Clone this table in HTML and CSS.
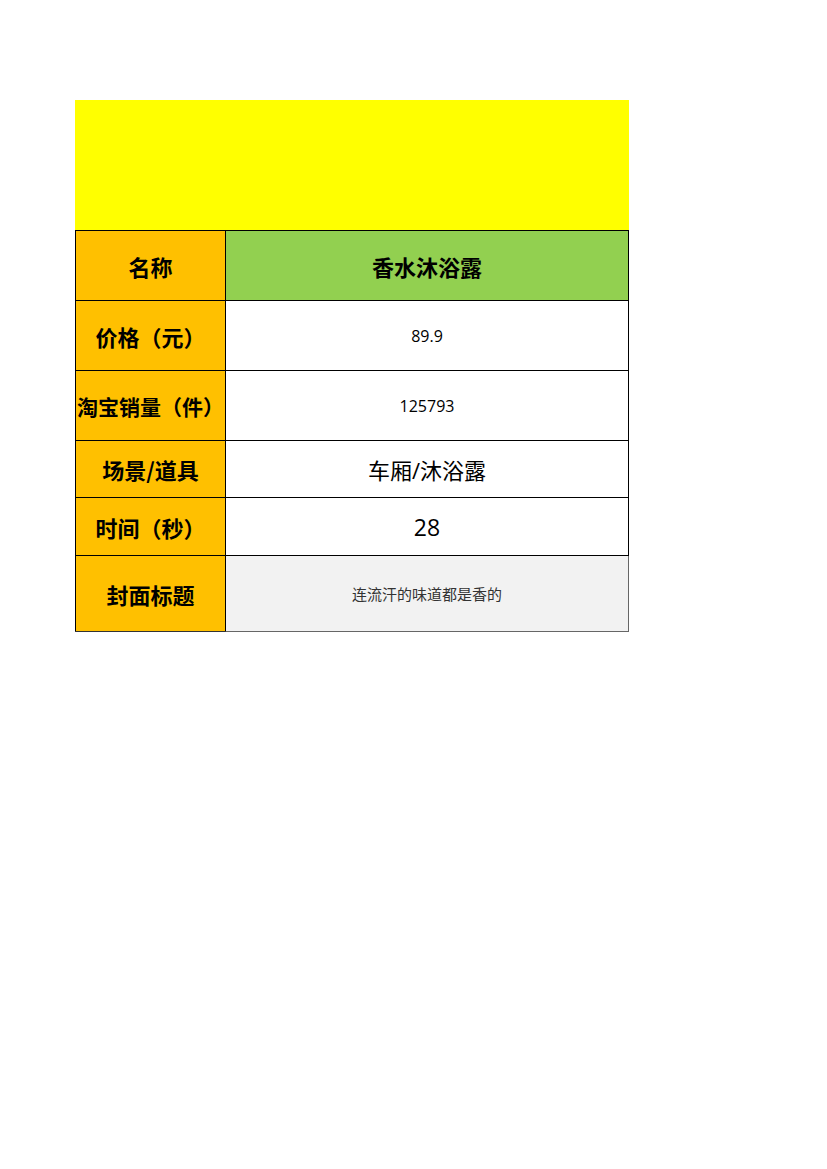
FILE: index.html
```html
<!DOCTYPE html>
<html lang="zh">
<head>
<meta charset="utf-8">
<link rel="stylesheet" href="styles.css">
</head>
<body>
<div class="sheet">
  <div class="banner"></div>
  <table class="info">
    <tr class="r1">
      <th class="label">名称</th>
      <td class="name">香水沐浴露</td>
    </tr>
    <tr class="r2">
      <th class="label">价格（元）</th>
      <td class="num">89.9</td>
    </tr>
    <tr class="r3">
      <th class="label long">淘宝销量（件）</th>
      <td class="num">125793</td>
    </tr>
    <tr class="r4">
      <th class="label">场景/道具</th>
      <td class="big">车厢/沐浴露</td>
    </tr>
    <tr class="r5">
      <th class="label">时间（秒）</th>
      <td class="big2">28</td>
    </tr>
    <tr class="r6">
      <th class="label last">封面标题</th>
      <td class="cover">连流汗的味道都是香的</td>
    </tr>
  </table>
</div>
</body>
</html>
```
FILE: styles.css
```css
html, body {
  margin: 0;
  padding: 0;
  background: #ffffff;
}
body {
  font-family: "Open Sans", "Noto Sans CJK SC", sans-serif;
  color: #000;
}
.sheet {
  padding: 100px 0 0 75px;
}
.banner {
  width: 554px;
  height: 130px;
  background: #ffff00;
}
.info {
  border-collapse: collapse;
  table-layout: fixed;
  width: 554px;
}
.info th, .info td {
  border: 1px solid #000;
  padding: 0;
  text-align: center;
  vertical-align: middle;
  white-space: nowrap;
  overflow: hidden;
}
.info th {
  width: 149px;
  background: #ffc000;
  font-family: "Noto Sans CJK SC", sans-serif;
  font-weight: 700;
  font-size: 22px;
  letter-spacing: 0;
}
.info th.long {
  font-size: 21px;
}
.info td {
  background: #ffffff;
}
.r1 { height: 70px; }
.r2 { height: 70px; }
.r3 { height: 70px; }
.r4 { height: 57px; }
.r5 { height: 58px; }
.r6 { height: 76px; }
.name {
  background: #92d050 !important;
  font-family: "Noto Sans CJK SC", sans-serif;
  font-weight: 700;
  font-size: 22px;
}
.num {
  font-size: 16px;
}
.big {
  font-family: "Open Sans", "Noto Sans CJK SC", sans-serif;
  font-size: 22px;
}
.big2 {
  font-size: 23px;
}
.cover {
  background: #f2f2f2 !important;
  font-family: "Noto Sans CJK SC", sans-serif;
  font-size: 15px;
  color: #333333;
  border-right-color: #666 !important;
  border-bottom-color: #666 !important;
}
.info th.last {
  border-bottom-color: #333;
}
```
